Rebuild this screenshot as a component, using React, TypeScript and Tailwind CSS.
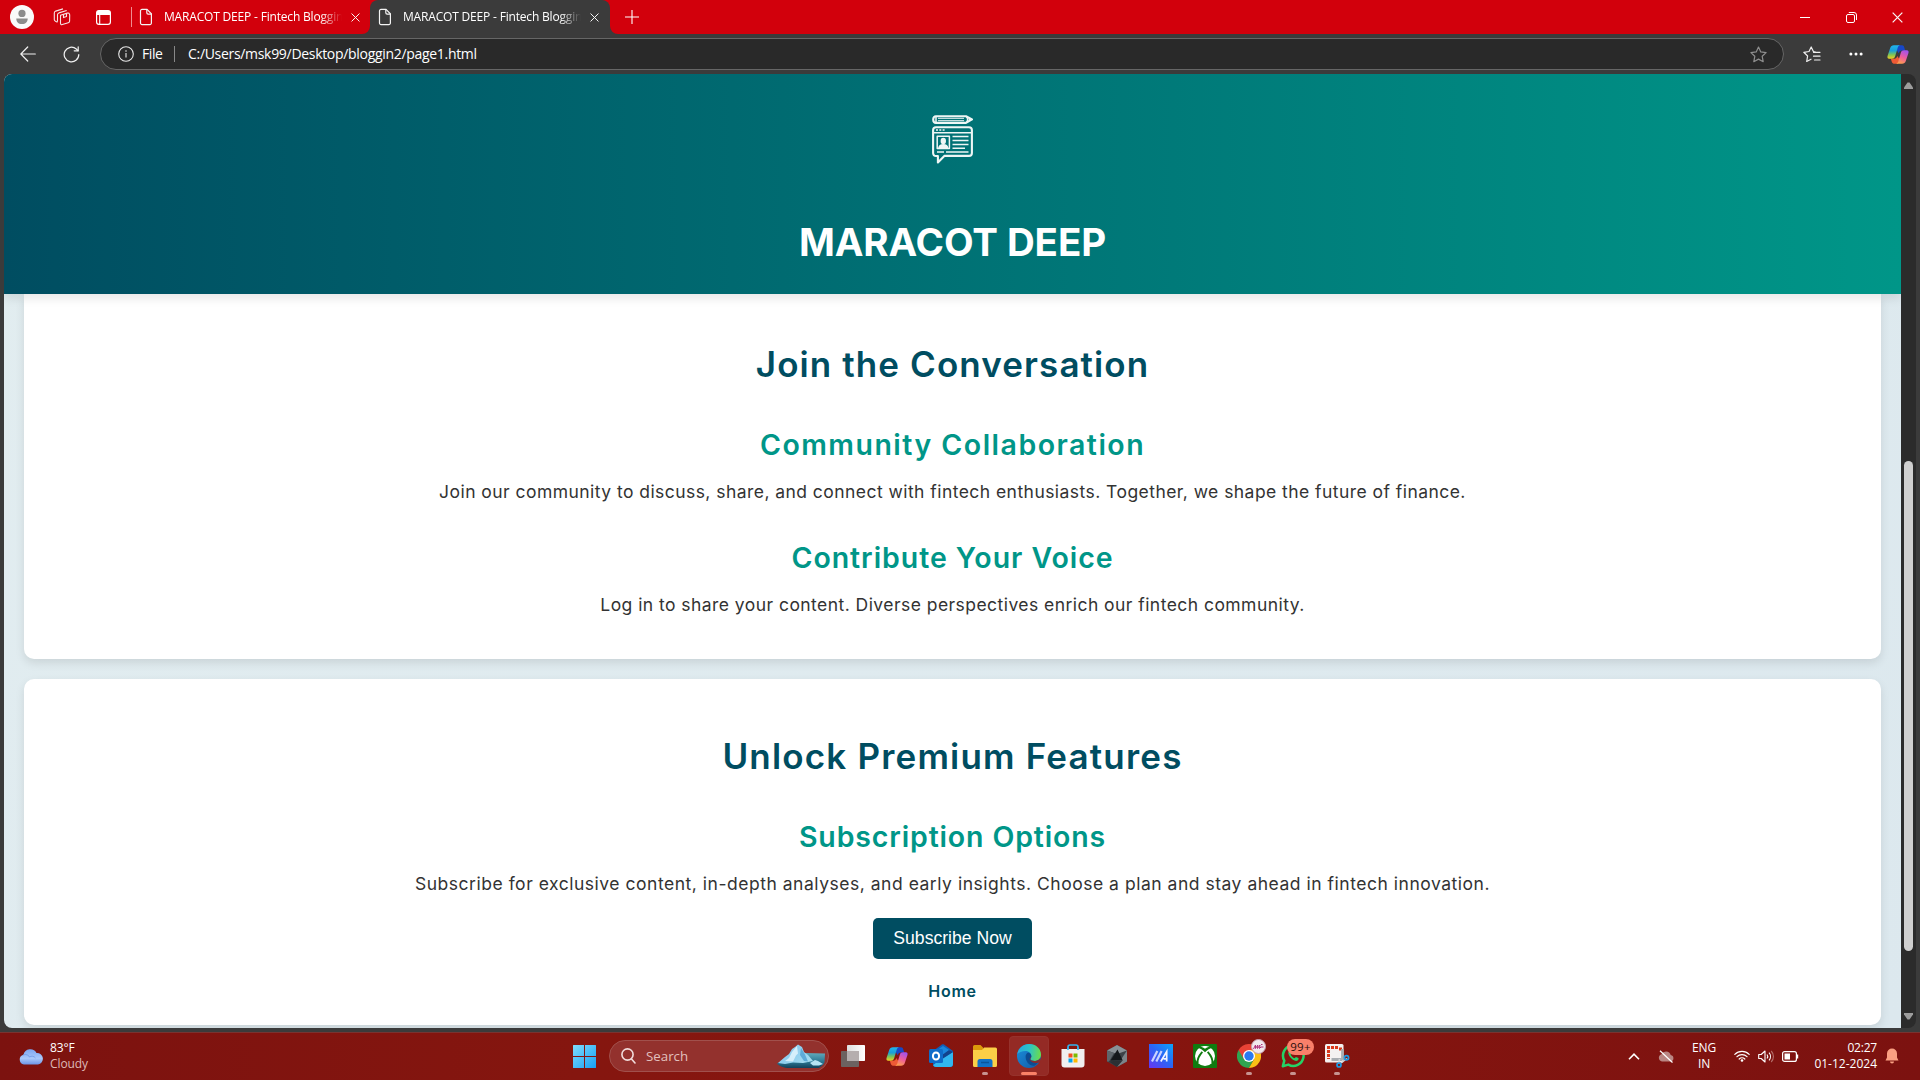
import React from 'react';

type Kids = { children?: React.ReactNode };

function DocIcon() {
  return (
    <svg width="14" height="18" viewBox="0 0 14 18" fill="none" stroke="#f4f4f4" strokeWidth="1.2" className="shrink-0">
      <path d="M3 1.4h5l4.4 4.4v9.3a1.5 1.5 0 0 1-1.5 1.5H3a1.5 1.5 0 0 1-1.5-1.5V2.9A1.5 1.5 0 0 1 3 1.4z" />
      <path d="M7.8 1.6v3.2a1.3 1.3 0 0 0 1.3 1.3h3.2" />
    </svg>
  );
}

function Cross({ size }: { size: number }) {
  return (
    <svg width={size} height={size} viewBox="0 0 10 10" stroke="#f8f8f8" strokeWidth="1.1" className="shrink-0">
      <path d="M.6.6l8.8 8.8M9.4.6L.6 9.4" />
    </svg>
  );
}

function CopilotIcon({ id, className }: { id: string; className: string }) {
  return (
    <svg viewBox="0 0 24 22" className={className}>
      <defs>
        <linearGradient id={id + 'a'} x1="0" y1="0" x2="0" y2="1">
          <stop offset="0" stopColor="#20b4ee" />
          <stop offset=".4" stopColor="#1a9fd8" />
          <stop offset=".7" stopColor="#7ec456" />
          <stop offset="1" stopColor="#f5cf20" />
        </linearGradient>
        <linearGradient id={id + 'b'} x1=".7" y1="0" x2=".3" y2="1">
          <stop offset="0" stopColor="#a052ee" />
          <stop offset=".5" stopColor="#ee5c9c" />
          <stop offset="1" stopColor="#ffa04a" />
        </linearGradient>
      </defs>
      <path d="M12 1h4.5c1.2 0 1.9.8 2.3 2l1 3.5h-3.5c-2 0-2.9 1-3.5 3L10.5 6z" fill="#1747c8" />
      <path d="M12 21H7.500c-1.200 0-1.900-.8-2.300-2l-1-3.500h3.500c2 0 2.900-1 3.500-3l2.300 3.500z" fill="#ee5a35" />
      <path d="M7.500 1h7c-1.600 0-2.300 1-2.800 2.600L8.900 13c-.6 1.900-1.600 2.700-3.600 2.700H2.400C.7 15.700.1 14.300.6 12.700L3.500 4C4.200 1.900 5.400 1 7.500 1z" fill={`url(#${id}a)`} />
      <path d="M16.500 21h-7c1.600 0 2.300-1 2.800-2.600L15.100 9c.6-1.900 1.600-2.700 3.600-2.700h2.900c1.700 0 2.300 1.400 1.800 3L20.500 18c-.7 2.100-1.900 3-4 3z" fill={`url(#${id}b)`} />
    </svg>
  );
}

function BrowserTab({ active }: { active?: boolean }) {
  return (
    <div className={active ? 'relative flex h-[34px] w-[240px] items-center rounded-t-lg bg-[#3b3b3b] pl-[8px]' : 'flex h-[34px] w-[238px] items-center pl-[7px]'}>
      {active && (
        <>
          <svg className="absolute -left-2 bottom-0" width="8" height="8"><path d="M8 0v8H0a8 8 0 0 0 8-8z" fill="#3b3b3b" /></svg>
          <svg className="absolute -right-2 bottom-0" width="8" height="8"><path d="M0 0v8h8a8 8 0 0 1-8-8z" fill="#3b3b3b" /></svg>
        </>
      )}
      <DocIcon />
      <span className="ml-[11px] w-[178px] overflow-hidden whitespace-nowrap text-[12px] leading-4 tracking-[-0.18px] text-white [mask-image:linear-gradient(to_right,black_88%,transparent)]">
        MARACOT DEEP - Fintech Bloggin
      </span>
      <span className="ml-[9px] flex"><Cross size={9} /></span>
    </div>
  );
}

function TitleBar() {
  return (
    <div className="flex h-[34px] items-center bg-[#d2000c]">
      <div className="flex w-[132px] items-center pl-[10px]">
        <svg width="24" height="24" viewBox="0 0 24 24">
          <circle cx="12" cy="12" r="12" fill="#fafafa" />
          <circle cx="12" cy="8.4" r="3.6" fill="#8c8c8c" />
          <path d="M6.3 13.500h11.400c0 3.500-2 5.500-5.700 5.500s-5.700-2-5.700-5.500z" fill="#8c8c8c" />
        </svg>
        <svg className="ml-[19px]" width="18" height="18" viewBox="0 0 18 18" fill="none" stroke="#f6e4e4" strokeWidth="1.1" strokeLinejoin="round">
          <path d="M7.500 7.200l6.800-2.100c1-.3 1.900.2 2.200 1l.2 1-.1 6.100c0 .8-.6 1.300-1.300 1.500l-6 1.900c-1 .3-1.800-.3-1.800-1.300z" />
          <path d="M4.500 13.700V6.800c0-1 .5-1.600 1.400-1.900l7.800-2.400" />
          <path d="M1.300 11.700V5c0-1 .5-1.600 1.400-1.900L10 .9M4.500 14.200l-2-1c-.8-.4-1.200-.8-1.200-1.500M10.500 6.400v3.200l3-1V5.400" />
        </svg>
        <svg className="ml-[25px]" width="15" height="15" viewBox="0 0 15 15">
          <rect x=".6" y=".6" width="13.800" height="13.800" rx="2.400" fill="none" stroke="#fff" strokeWidth="1.200" />
          <path d="M.6 5V3A2.400 2.400 0 0 1 3 .6h9A2.400 2.400 0 0 1 14.400 3v2z" fill="#fff" />
          <path d="M3.700 4.500v9.500" stroke="#fff" strokeWidth="1.100" />
        </svg>
        <i className="ml-[20px] h-5 w-px bg-[#f08c90]" />
      </div>
      <BrowserTab />
      <BrowserTab active />
      <svg className="ml-[15px]" width="14" height="14" viewBox="0 0 14 14" stroke="#fff" strokeWidth="1.100"><path d="M7 0v14M0 7h14" /></svg>
      <div className="ml-auto flex items-center">
        <i className="h-px w-[10px] bg-white" />
        <svg className="ml-[36px]" width="11" height="11" viewBox="0 0 11 11" fill="none" stroke="#fff" strokeWidth="1">
          <rect x=".5" y="2.500" width="8" height="8" rx="1.500" />
          <path d="M2.800.5H8a2.500 2.500 0 0 1 2.500 2.500v5" />
        </svg>
        <span className="mr-[17px] ml-[35px]"><Cross size={11} /></span>
      </div>
    </div>
  );
}

function AddressBar() {
  return (
    <div className="flex h-[40px] items-center bg-[#3b3b3b] pl-[20px]">
      <svg width="16" height="16" viewBox="0 0 16 16" fill="none" stroke="#f2f2f2" strokeWidth="1.200" strokeLinecap="round"><path d="M15.300 8H1M7.700 1L.8 8l6.900 7" /></svg>
      <svg className="ml-[27px]" width="17" height="17" viewBox="0 0 17 17" fill="none" stroke="#f2f2f2" strokeWidth="1.200" strokeLinecap="round">
        <path d="M15.800 8.500a7.300 7.300 0 1 1-2.500-5.500l1.500 1.500" />
        <path d="M15.200.8v4h-4" />
      </svg>
      <div className="ml-[20px] flex h-8 w-[1684px] items-center rounded-full border border-[#666] bg-[#292929] pl-[17px]">
        <svg width="16" height="16" viewBox="0 0 16 16" fill="none" stroke="#e8e8e8" strokeWidth="1.100"><circle cx="8" cy="8" r="7.300" /><path d="M8 7v4.500M8 4.300v1.400" /></svg>
        <span className="ml-[8px] w-[32px] text-[14px] leading-5 tracking-[-0.4px] text-white">File</span>
        <i className="h-4 w-px bg-[#888]" />
        <span className="ml-[13px] text-[14px] leading-5 tracking-[-0.31px] text-white">C:/Users/msk99/Desktop/bloggin2/page1.html</span>
        <svg className="mr-[16px] ml-auto" width="17" height="17" viewBox="0 0 17 17" fill="none" stroke="#8e8e8e" strokeWidth="1.200" strokeLinejoin="round">
          <path d="M8.500 1l2.300 4.900 5.300.7-3.900 3.700 1 5.400-4.700-2.600-4.700 2.600 1-5.400L.9 6.600l5.300-.7z" />
        </svg>
      </div>
      <svg className="ml-[19px]" width="18" height="17" viewBox="0 0 18 17" fill="none" stroke="#f0f0f0" strokeWidth="1.200" strokeLinejoin="round" strokeLinecap="round">
        <path d="M12.500 6L10.400 5.500 8.200 1 6 5.500l-5.200.8 3.800 3.700-.9 5.500L8 13.200M10.500 6.300h6.500M10.500 10.200h6.500M11.500 14h5.500" />
      </svg>
      <svg className="ml-[28px]" width="14" height="4" viewBox="0 0 14 4" fill="#fff"><circle cx="1.900" cy="2" r="1.500" /><circle cx="7" cy="2" r="1.500" /><circle cx="12.100" cy="2" r="1.500" /></svg>
      <CopilotIcon id="top" className="ml-[24px] h-[21px] w-[22px]" />
    </div>
  );
}

function BlogLogo() {
  return (
    <svg width="41" height="49" viewBox="0 0 41 49" fill="none" stroke="#eef6f5" strokeWidth="2.100" strokeLinejoin="round">
      <path d="M4 1.200h30l6 3.200L34 7.900H4C2.200 7.900 1.200 6.400 1.200 4.500S2.200 1.200 4 1.200z" />
      <path d="M6 3.300h26M6 5.700h26" strokeWidth="1" />
      <path d="M4 1.500v6M34.500 1.500c1.500 2 1.500 4 0 6" strokeWidth="1.500" />
      <path d="M40 4.300l-3-1.600v3.200z" fill="#eef6f5" strokeWidth=".8" />
      <path d="M4 12.200h33c1.800 0 2.900 1 2.900 2.900V38c0 1.800-1.100 2.900-2.900 2.900H12.300L5.900 47.500V41H4c-1.800 0-2.900-1.200-2.900-3V15.100c0-1.900 1.100-2.900 2.900-2.900z" />
      <path d="M1.500 17.800h38" strokeWidth="1.500" />
      <path d="M4 15h2M7.300 15h2M10.600 15h2" strokeWidth="1.300" />
      <rect x="5.200" y="21.300" width="12.200" height="12.200" strokeWidth="1.500" />
      <ellipse cx="11.300" cy="26" rx="2.700" ry="3.200" fill="#eef6f5" stroke="none" />
      <path d="M6.200 33c.3-2.800 2-3.800 5.100-4 3.100.2 4.800 1.200 5.100 4z" fill="#eef6f5" stroke="none" />
      <path d="M20.500 21.500h16M20.500 25.500h16M20.500 29.500h16M20.500 33.200h12.500M5 37h7M14 37h22.500" strokeWidth="1.500" />
    </svg>
  );
}

function Card({ className, children }: Kids & { className: string }) {
  return <section className={'mx-5 flex flex-col items-center bg-white text-center shadow-[0_4px_10px_rgba(0,0,0,0.1)] ' + className}>{children}</section>;
}

function Title({ className, children }: Kids & { className: string }) {
  return <h2 className={'text-[35px] leading-[54px] font-semibold text-[#004d61] ' + className}>{children}</h2>;
}

function Subtitle({ className, children }: Kids & { className: string }) {
  return <h3 className={'text-[28.5px] leading-[44px] font-semibold text-[#009688] ' + className}>{children}</h3>;
}

function Text({ className, children }: Kids & { className: string }) {
  return <p className={'mt-[11px] text-[17.5px] leading-7 whitespace-nowrap text-[#333] ' + className}>{children}</p>;
}

function Page() {
  return (
    <div className="flex h-[954px] overflow-hidden rounded-lg bg-[#2b2b2b] font-['Inter',sans-serif]">
      <main className="w-[1897px] overflow-hidden bg-[linear-gradient(135deg,#e2edf0,#dce8ee)]">
        <header className="relative flex h-[220px] flex-col items-center bg-[linear-gradient(to_right,#004d61,#009688)] pt-[41px] shadow-[0_4px_10px_rgba(0,0,0,0.1)]">
          <BlogLogo />
          <h1 className="mt-[48px] text-[38.5px] leading-[60px] font-bold tracking-[-0.1px] text-white">MARACOT DEEP</h1>
        </header>
        <Card className="h-[365px] rounded-b-[10px] pt-[43px]">
          <Title className="tracking-[1.1px]">Join the Conversation</Title>
          <Subtitle className="mt-8 tracking-[1.48px]">Community Collaboration</Subtitle>
          <Text className="tracking-[0.45px]">Join our community to discuss, share, and connect with fintech enthusiasts. Together, we shape the future of finance.</Text>
          <Subtitle className="mt-[30px] tracking-[0.95px]">Contribute Your Voice</Subtitle>
          <Text className="tracking-[0.45px]">Log in to share your content. Diverse perspectives enrich our fintech community.</Text>
        </Card>
        <Card className="mt-5 h-[346px] rounded-[10px] pt-[50px]">
          <Title className="tracking-[1.18px]">Unlock Premium Features</Title>
          <Subtitle className="mt-8 tracking-[0.85px]">Subscription Options</Subtitle>
          <Text className="tracking-[0.52px]">Subscribe for exclusive content, in-depth analyses, and early insights. Choose a plan and stay ahead in fintech innovation.</Text>
          <button className="mt-5 h-[41px] w-[159px] rounded-[5px] bg-[#004d61] pb-[1px] font-['Liberation_Sans',Arial,sans-serif] text-[17.6px] text-white">Subscribe Now</button>
          <a className="mt-5 text-[16px] leading-6 font-semibold tracking-[0.7px] text-[#004d61]">Home</a>
        </Card>
      </main>
      <div className="flex w-[15px] flex-col items-center">
        <svg className="mt-[8px]" width="9" height="7" viewBox="0 0 9 7"><path d="M3.500.6h2L9 5.500V7H0V5.500z" fill="#9c9c9c" /></svg>
        <i className="mt-[372px] h-[490px] w-[9px] rounded-full bg-[#cfcfcf]" />
        <svg className="mt-[62px]" width="9" height="7" viewBox="0 0 9 7"><path d="M3.500 6.400h2L9 1.500V0H0v1.500z" fill="#9c9c9c" /></svg>
      </div>
    </div>
  );
}

function TaskItem({ children, running, active }: Kids & { running?: boolean; active?: boolean }) {
  return (
    <div className={active ? 'relative mx-0.5 flex h-10 w-10 items-center justify-center rounded border border-[#96322c] bg-[#942a25]' : 'relative mx-0.5 flex h-10 w-10 items-center justify-center'}>
      {children}
      {running && <i className="absolute bottom-[1px] h-[3px] w-[6px] rounded-full bg-[#c79390]" />}
      {active && <i className="absolute bottom-0 h-[3px] w-[16px] rounded-full bg-[#fa8167]" />}
    </div>
  );
}

function Iceberg() {
  return (
    <svg width="50" height="25" viewBox="0 0 50 25">
      <defs>
        <linearGradient id="sea" x1="0" y1="0" x2="0" y2="1"><stop offset="0" stopColor="#5fa9bb" /><stop offset=".6" stopColor="#2a7591" /><stop offset="1" stopColor="#12405a" /></linearGradient>
        <linearGradient id="ice" x1="0" y1="0" x2="1" y2=".6"><stop offset="0" stopColor="#a9daf4" /><stop offset=".5" stopColor="#8fcdee" /><stop offset="1" stopColor="#a4dcf0" /></linearGradient>
      </defs>
      <path d="M28 9l21 .5-.5 9c-1.500 3-3 4-6 5.500H13c-5 0-10-2-12-4.500l6-3z" fill="url(#sea)" />
      <path d="M2 19l7-6 4-3 3-5 3-2 3-2.500 4 2.500 2 5 4 3 5 6-10 2-10-.5-8 1.500z" fill="url(#ice)" />
      <path d="M21 2l-5 6-3 6-4 3 8 .5 3-6 2-2z" fill="#d5effb" />
      <path d="M25 4l-1 7 4 6 4 .5-3-7z" fill="#5eabd8" />
      <path d="M34 19l5-3 3 1 5 3-4 1.500h-6z" fill="#b6e3f4" />
    </svg>
  );
}

function Taskbar() {
  return (
    <div className="flex h-12 items-center border-t border-[#7a3330] bg-[linear-gradient(to_right,#7c120f,#85160f_30%,#86150f_60%,#7c1210)] pb-px">
      <div className="flex w-[562px] items-center pl-[18px]">
        <svg width="26" height="17" viewBox="0 0 26 17">
          <defs><linearGradient id="cloud" x1="0" y1="0" x2="0" y2="1"><stop offset="0" stopColor="#7da6f0" /><stop offset=".6" stopColor="#a9c8fa" /><stop offset="1" stopColor="#6d95e6" /></linearGradient></defs>
          <path d="M6 16.500a5 5 0 0 1-.5-9.800 7 7 0 0 1 13-1.700 5.800 5.800 0 0 1 1.500 11.500z" fill="url(#cloud)" />
          <path d="M5 7c3-1.300 6 .3 6.500 2 2-1.300 4.500-1 6 1" fill="none" stroke="#6f98e4" strokeWidth=".8" />
        </svg>
        <div className="ml-[6px] text-[12px] leading-4 tracking-[-0.1px] text-[#fff]">
          <p>83°F</p>
          <p className="text-[#ddb9b7]">Cloudy</p>
        </div>
      </div>
      <div className="flex w-[44px] justify-center">
        <svg width="23" height="23" viewBox="0 0 23 23">
          <defs><linearGradient id="win" x1="0" y1="0" x2="1" y2="1"><stop offset="0" stopColor="#7fdcfb" /><stop offset="1" stopColor="#17a0f4" /></linearGradient></defs>
          <path d="M0 .5A.5.5 0 0 1 .5 0H11v11H0zM12 0h10.500a.5.5 0 0 1 .5.5V11H12zM0 12h11v11H.5a.5.5 0 0 1-.5-.5zM12 12h11v10.500a.5.5 0 0 1-.5.5H12z" fill="url(#win)" />
        </svg>
      </div>
      <div className="mr-[2px] ml-[3px] flex h-8 w-[220px] items-center rounded-full border border-[#a1504c] bg-[#93312d] pl-[11px]">
        <svg width="15" height="16" viewBox="0 0 15 16" fill="none" stroke="#f1dcdb" strokeWidth="1.600" strokeLinecap="round"><circle cx="6.500" cy="6.500" r="5.600" /><path d="M10.500 11l3.500 4" /></svg>
        <span className="ml-[10px] text-[13.3px] leading-5 text-[#e2c0be]">Search</span>
        <span className="mr-[2px] ml-auto"><Iceberg /></span>
      </div>
      <TaskItem>
        <svg width="24" height="24" viewBox="0 0 24 24">
          <defs><linearGradient id="tv" x1="0" y1="0" x2="1" y2="0"><stop offset="0" stopColor="#dedede" /><stop offset="1" stopColor="#fff" /></linearGradient></defs>
          <rect x="6" y="1" width="18" height="16" rx=".8" fill="url(#tv)" />
          <rect x="0" y="7" width="18" height="16" rx=".8" fill="#6c6260" />
          <path d="M6 7h12v10H6z" fill="#b5aeae" />
        </svg>
      </TaskItem>
      <TaskItem><CopilotIcon id="task" className="h-[21px] w-[22px]" /></TaskItem>
      <TaskItem>
        <svg width="24" height="24" viewBox="0 0 24 24">
          <path d="M4 7l9-6.500c.8-.5 1.300-.5 2 0L24 7v13a3 3 0 0 1-3 3H7a3 3 0 0 1-3-3z" fill="#0f5fb8" />
          <path d="M6 7.500L14 2l9 6-9 7z" fill="#1a86dc" />
          <path d="M24 8v12a3 3 0 0 1-3 3H7a3 3 0 0 1-3-2l10-7z" fill="#31b7f0" />
          <path d="M24 8L14 14.500l-3-2L20 6z" fill="#12438c" />
          <rect x="0" y="5" width="14" height="14" rx="1.500" fill="#0f6cc9" />
          <ellipse cx="7" cy="12" rx="3.100" ry="3.600" fill="none" stroke="#fff" strokeWidth="2" />
        </svg>
      </TaskItem>
      <TaskItem running>
        <svg width="24" height="22" viewBox="0 0 24 22">
          <path d="M0 1.500A1.500 1.500 0 0 1 1.500 0h6L10 2.500V8H0z" fill="#dc9a0c" />
          <path d="M0 5h9l2-2.500h11.500A1.500 1.500 0 0 1 24 4v16.500a1.500 1.500 0 0 1-1.500 1.500h-21A1.500 1.500 0 0 1 0 20.500z" fill="#fbcf47" />
          <path d="M4.500 22v-5.500a2.500 2.500 0 0 1 2.500-2.500h10a2.500 2.500 0 0 1 2.500 2.500V22z" fill="#1272c8" />
          <path d="M8 17.500h8" stroke="#0b559c" strokeWidth="1.500" />
        </svg>
      </TaskItem>
      <TaskItem active>
        <svg width="24" height="24" viewBox="0 0 24 24">
          <defs>
            <linearGradient id="eg" x1="0" y1=".3" x2="1" y2=".4"><stop offset="0" stopColor="#28a8e0" /><stop offset=".5" stopColor="#2cc4c8" /><stop offset="1" stopColor="#6cdc4a" /></linearGradient>
            <linearGradient id="eb" x1="0" y1="0" x2="1" y2="1"><stop offset="0" stopColor="#1b8fdc" /><stop offset="1" stopColor="#1159a5" /></linearGradient>
          </defs>
          <circle cx="12" cy="12" r="12" fill="url(#eb)" />
          <path d="M.3 10C1.500 4 6.400 0 12.200 0 19 0 24 5 24 10.500c0 4-3 6.500-6.500 6.500-2.800 0-4.300-1-4.300-2 0-.7 1.100-1.200 1.100-3C14.300 9.500 12 7 8.500 7 5 7 1.500 8.500.3 10z" fill="url(#eg)" />
          <path d="M8.600 12.500c0-1.700.9-3 2.400-4 2 .5 3.300 1.900 3.300 3.500 0 1.800-1.100 2.300-1.100 3 0 1 1.500 2 4.300 2 2 0 3.700-.6 4.700-1.300-.8 2.300-2.300 4.500-4.900 6-5 .5-8.700-4-8.700-9.200z" fill="#0c4c92" />
          <path d="M14.300 12c0 1.800-1.100 2.300-1.100 3 0 1 1.500 2 4.300 2 2.600 0 4.600-1 5.700-2.700L24 18l-2 .5c-4 1.500-8.500 0-9.500-3.500z" fill="#942a25" opacity=".9" />
        </svg>
      </TaskItem>
      <TaskItem>
        <svg width="24" height="24" viewBox="0 0 24 24">
          <path d="M7 6V3a2 2 0 0 1 2-2h6a2 2 0 0 1 2 2v3" fill="none" stroke="#34b3ef" strokeWidth="1.600" />
          <path d="M.5 5h23v15.500a3 3 0 0 1-3 3h-17a3 3 0 0 1-3-3z" fill="#f1efef" />
          <path d="M7 6V3.500M17 6V3.500" stroke="#34b3ef" strokeWidth="1.600" />
          <path d="M7.500 9.500H11.500v4h-4z" fill="#f25022" /><path d="M12.500 9.500h4v4h-4z" fill="#7fba00" /><path d="M7.500 14.500h4v4h-4z" fill="#00a4ef" /><path d="M12.500 14.500h4v4h-4z" fill="#ffb900" />
        </svg>
      </TaskItem>
      <TaskItem>
        <svg width="22" height="24" viewBox="0 0 22 24">
          <path d="M11 1l10 5.500v11L11 23 1 17.500v-11z" fill="#3c4247" />
          <path d="M11 1l10 5.500L11 10 1 6.500z" fill="#8a9196" /><path d="M1 6.500L8 9 3 17.500l-2 0z" fill="#5f666b" /><path d="M21 6.500v11L11 23l3-6z" fill="#7d8489" />
          <path d="M11.500 5.500l5 10.500-12 .5z" fill="#14181b" /><path d="M3 17.500l14-1.500-6 7z" fill="#2b3034" />
        </svg>
      </TaskItem>
      <TaskItem>
        <svg width="24" height="24" viewBox="0 0 24 24">
          <defs><linearGradient id="ma" x1="0" y1="1" x2="1" y2="0"><stop offset="0" stopColor="#6a35f2" /><stop offset=".5" stopColor="#2c63f5" /><stop offset="1" stopColor="#0aa5fa" /></linearGradient></defs>
          <path d="M0 0h24v24H0z" fill="url(#ma)" />
          <path d="M3 17.500L8.300 7M7.300 17.500L12.600 7" fill="none" stroke="#c9d2ff" strokeWidth="2.200" />
          <path d="M11.800 17.500L17.700 7.500V17.500M14.500 14.800h3" fill="none" stroke="#f2f5ff" strokeWidth="1.700" />
        </svg>
      </TaskItem>
      <TaskItem>
        <svg width="24" height="24" viewBox="0 0 24 24">
          <rect width="24" height="24" rx="1" fill="#107c10" />
          <circle cx="12" cy="12" r="10" fill="#fff" />
          <path d="M4 4c3 0 6 2 8 4.300C14 6 17 4 20 4l-3.500-3H7.500zM7 3l5 2.200L17 3" fill="#107c10" />
          <path d="M7.500 2.800C9.300 2.200 10.500 2 12 2s2.700.2 4.500.8C14.800 2.900 13.300 3.800 12 4.700c-1.300-.9-2.800-1.800-4.500-1.900z" fill="#fff" />
          <path d="M9.300 7.800C6.500 11 4 15.500 4.800 19M14.700 7.800c2.800 3.200 5.300 7.700 4.500 11.200" fill="none" stroke="#107c10" strokeWidth="1.900" />
        </svg>
      </TaskItem>
      <TaskItem running>
        <svg width="24" height="24" viewBox="0 0 24 24">
          <path d="M12 12L1.600 6A12 12 0 0 1 22.400 6z" fill="#e94235" />
          <path d="M12 12L1.600 6A12 12 0 0 0 12 24l5.200-9z" fill="#2fa450" />
          <path d="M12 6h10.400A12 12 0 0 1 12 24l5.200-9z" fill="#fbc016" />
          <path d="M1.600 6h20.800H12l-5.200 9z" fill="#e94235" />
          <circle cx="12" cy="12" r="6" fill="#fff" /><circle cx="12" cy="12" r="4.700" fill="#2a7af0" />
        </svg>
        <span className="absolute top-[3px] right-[3px] flex h-[15px] w-[15px] items-center justify-center rounded-full border border-[#c7a0b0] bg-[#f1e8ec]">
          <svg width="11" height="7" viewBox="0 0 11 7" fill="none" stroke="#b0307c" strokeWidth="1"><path d="M.5 6l2-4v3.500l2.300-3.500-.3 3.500L7 2l-.5 3.500L8 4h2.500M8 1.500h1.500" /></svg>
        </span>
      </TaskItem>
      <TaskItem running>
        <svg width="24" height="24" viewBox="0 0 24 24" fill="none">
          <path d="M1.800 22.200l1.500-5.600A10.300 10.300 0 1 1 7.300 20.600z" stroke="#25d366" strokeWidth="2.500" strokeLinejoin="round" />
          <path d="M8.700 6.500c-1 .5-1.700 1.700-1.300 3.300.9 3.300 3.600 6 6.800 7 1.600.4 2.900-.4 3.300-1.500v-1.200l-2.600-1.200-1.300 1.400c-1.900-.7-3.200-2-4-3.800L10.800 9.300 9.700 6.500z" fill="#25d366" />
        </svg>
        <span className="absolute top-[3px] left-[14px] h-4 w-[27px] rounded-full bg-[#f9806a] text-center text-[11.5px] leading-[16px] tracking-[0.2px] text-[#2a0f0c]">99+</span>
      </TaskItem>
      <TaskItem running>
        <svg width="26" height="24" viewBox="0 0 26 24" className="ml-[2px]">
          <rect x="0" y="0" width="18.500" height="18.500" rx="1.500" fill="#f4f1f1" />
          <path d="M13 3.500H3.500V15M15.500 3.500v4" fill="none" stroke="#d9391c" strokeWidth="3" strokeDasharray="3 1" />
          <path d="M17.500 5v11M6.500 15.500h11" stroke="#a9adb2" strokeWidth="2.800" />
          <path d="M16 19l6-4.500M14.500 15l-1 5" stroke="#d3d6d9" strokeWidth="1.500" />
          <circle cx="21.500" cy="13.800" r="2.100" fill="none" stroke="#1d9be6" strokeWidth="1.700" /><circle cx="14" cy="21" r="2" fill="none" stroke="#1d9be6" strokeWidth="1.700" />
        </svg>
      </TaskItem>
      <div className="ml-auto flex items-center text-[12px] leading-4 text-white">
        <svg width="12" height="7" viewBox="0 0 12 7" fill="none" stroke="#fff" strokeWidth="1.600"><path d="M1 6.200l5-5 5 5" /></svg>
        <svg className="ml-[18px]" width="16" height="13" viewBox="0 0 16 13">
          <path d="M4 11.500a3.700 3.700 0 0 1-.5-7.200 5 5 0 0 1 9.200.7 3.300 3.300 0 0 1 0 6.500z" fill="#b98582" /><path d="M2 .8L14.500 12.500" stroke="#fff" strokeWidth="1.200" />
        </svg>
        <div className="ml-[18px] w-[24px] text-center tracking-[-0.2px]"><p>ENG</p><p>IN</p></div>
        <svg className="ml-[18px]" width="16" height="12" viewBox="0 0 16 12" fill="none" stroke="#fff" strokeWidth="1.200" strokeLinecap="round">
          <path d="M.8 4.300a10.200 10.200 0 0 1 14.400 0M3 6.700a7 7 0 0 1 10 0M5.200 9a4 4 0 0 1 5.600 0" /><circle cx="8" cy="10.500" r="1.300" fill="#fff" stroke="none" />
        </svg>
        <svg className="ml-[8px]" width="16" height="13" viewBox="0 0 16 13" fill="none" stroke="#fff" strokeWidth="1.100" strokeLinejoin="round">
          <path d="M.7 4.500h2.500L7 1v11L3.200 8.500H.7zM9 4.500c.9 1.200.9 2.800 0 4M11 2.700c2 2.200 2 5.400 0 7.600" /><path d="M13.200 1c3 3.200 3 7.800 0 11" stroke="#b46e6b" />
        </svg>
        <svg className="ml-[8px]" width="17" height="11" viewBox="0 0 17 11"><rect x=".6" y=".6" width="13.800" height="9.800" rx="2" fill="none" stroke="#fff" strokeWidth="1.200" /><path d="M2.500 2.500H8v6H2.500zM15 3.500h1.200v4H15z" fill="#fff" /></svg>
        <div className="ml-[15px] w-[63px] text-right"><p className="tracking-[-0.2px]">02:27</p><p className="whitespace-nowrap">01-12-2024</p></div>
        <svg className="mr-[21px] ml-[8px]" width="14" height="16" viewBox="0 0 14 16" fill="#fa9f82"><path d="M7 .5a5 5 0 0 1 5 5v4l1.500 3H.5l1.500-3v-4a5 5 0 0 1 5-5zM5 13.500h4a2 2 0 0 1-4 0z" /></svg>
      </div>
    </div>
  );
}

export default function App() {
  return (
    <div className="h-[1080px] w-[1920px] overflow-hidden bg-[#3b3b3b] font-['Open_Sans','Noto_Sans',sans-serif]">
      <TitleBar />
      <AddressBar />
      <div className="h-[958px] px-1">
        <Page />
      </div>
      <Taskbar />
    </div>
  );
}
